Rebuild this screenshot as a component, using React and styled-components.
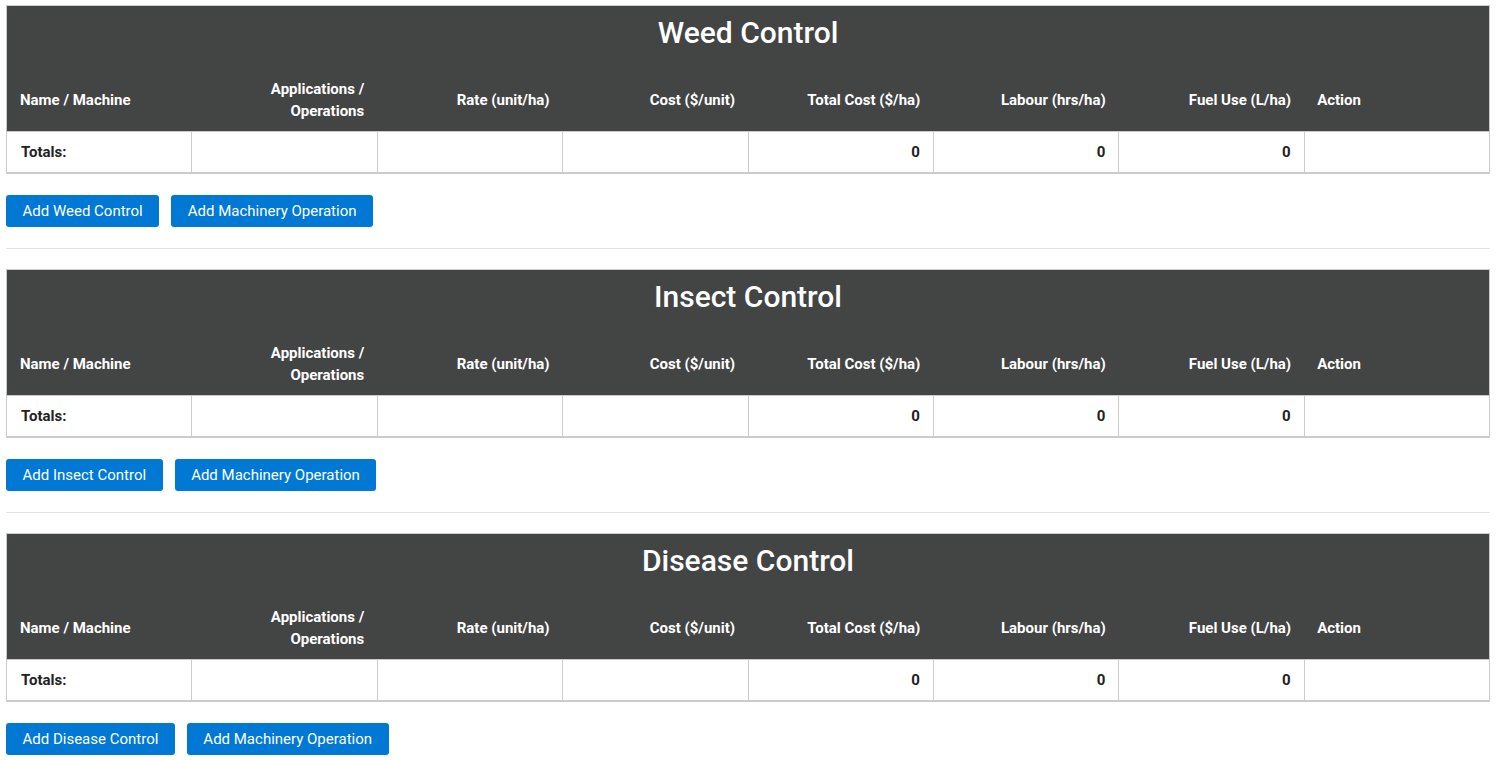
import React from 'react'
import styled, { createGlobalStyle } from 'styled-components'

const GlobalStyle = createGlobalStyle`
  body {
    margin: 0;
    background: #fff;
    font-family: Roboto, 'Liberation Sans', Arial, sans-serif;
  }
`

const columns = [
  { label: 'Name / Machine', align: 'left' },
  { label: 'Applications / Operations', align: 'right' },
  { label: 'Rate (unit/ha)', align: 'right' },
  { label: 'Cost ($/unit)', align: 'right' },
  { label: 'Total Cost ($/ha)', align: 'right' },
  { label: 'Labour (hrs/ha)', align: 'right' },
  { label: 'Fuel Use (L/ha)', align: 'right' },
  { label: 'Action', align: 'left' },
]

const totals = ['Totals:', '', '', '', '0', '0', '0', '']

const sections = [
  { title: 'Weed Control', add: 'Add Weed Control' },
  { title: 'Insect Control', add: 'Add Insect Control' },
  { title: 'Disease Control', add: 'Add Disease Control' },
]

function CostSection({ title, add, last }) {
  return (
    <Section>
      <Table>
        <thead>
          <tr>
            <TitleCell colSpan={columns.length}>{title}</TitleCell>
          </tr>
          <tr>
            {columns.map((c) => (
              <HeadCell key={c.label} align={c.align}>
                {c.label}
              </HeadCell>
            ))}
          </tr>
        </thead>
        <tbody>
          <tr>
            {totals.map((t, i) => (
              <TotalCell key={i} align={i === 0 ? 'left' : 'right'}>
                {t}
              </TotalCell>
            ))}
          </tr>
        </tbody>
      </Table>
      <ButtonRow>
        <Button>{add}</Button>
        <Button>Add Machinery Operation</Button>
      </ButtonRow>
      {!last && <Divider />}
    </Section>
  )
}

export default function App() {
  return (
    <Page>
      <GlobalStyle />
      {sections.map((s, i) => (
        <CostSection
          key={s.title}
          title={s.title}
          add={s.add}
          last={i === sections.length - 1}
        />
      ))}
    </Page>
  )
}

const Page = styled.div`
  padding: 5px 7px 0 6px;
`

const Section = styled.section`
  display: flex;
  flex-direction: column;
`

const Table = styled.table`
  width: 100%;
  table-layout: fixed;
  border-collapse: collapse;
  border: 1px solid #cbcbcb;
  border-bottom-width: 2px;
`

const TitleCell = styled.th`
  height: 63px;
  box-sizing: border-box;
  padding: 0 0 9px;
  background: #434444;
  color: #fff;
  font-size: 30px;
  font-weight: 500;
  line-height: 36px;
  text-align: center;
  vertical-align: middle;
  border: none;
`

const HeadCell = styled.th`
  height: 62px;
  padding: 0 13px;
  background: #434444;
  color: #fff;
  font-size: 15px;
  font-weight: 700;
  line-height: 22px;
  text-align: ${(p) => p.align};
  vertical-align: middle;
`

const TotalCell = styled.td`
  height: 40px;
  padding: 0 13px 0 14px;
  border: 1px solid #cbcbcb;
  color: #222;
  font-size: 15px;
  font-weight: 700;
  text-align: ${(p) => p.align};
  vertical-align: middle;
`

const ButtonRow = styled.div`
  display: flex;
  gap: 12px;
  margin-top: 21px;
`

const Button = styled.button`
  height: 32px;
  padding: 0 16.5px;
  border: none;
  border-radius: 3px;
  background: #0078d4;
  color: #fff;
  font-family: Roboto, 'Liberation Sans', Arial, sans-serif;
  font-size: 15px;
  font-weight: 400;
  cursor: pointer;
`

const Divider = styled.hr`
  width: 100%;
  margin: 21px 0 20.5px;
  border: none;
  border-top: 1px solid #e3e3e3;
`
